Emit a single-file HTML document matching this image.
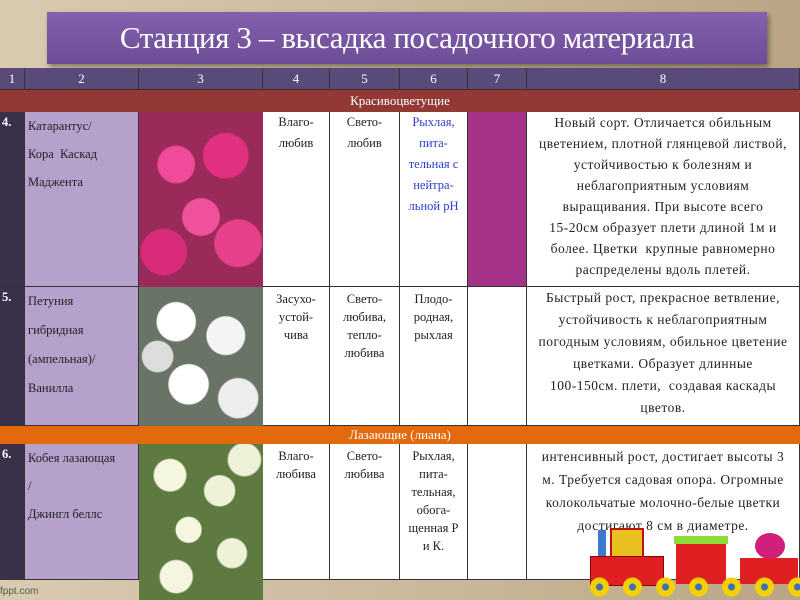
<!DOCTYPE html>
<html><head><meta charset="utf-8"><style>
body{margin:0;width:800px;height:600px;overflow:hidden;background:linear-gradient(90deg,#d9cbb0,#c8b698 60%,#b9a585);font-family:"Liberation Serif",serif;position:relative}
.title{position:absolute;left:47px;top:12px;width:720px;height:52px;background:linear-gradient(#8460ad,#6d4d98);box-shadow:2px 3px 5px rgba(0,0,0,.4);color:#fff;font-size:31px;text-align:center;line-height:52px;letter-spacing:-0.4px}
.c{position:absolute;box-sizing:border-box;border-right:1px solid #333;border-bottom:1px solid #333;font-size:12.5px;line-height:21px;text-align:center;color:#222}
.h{background:#5a4a7a;color:#fff;font-size:13px;line-height:22px}
.n{background:#3b3049;color:#fff;text-align:left;padding-left:2px;font-weight:bold}
.p{background:#b6a0cc;text-align:left;padding-left:3px;line-height:28px}
.w{background:#fff}
.t{white-space:nowrap;font-size:13.5px;letter-spacing:0.5px}
.band{position:absolute;left:0;width:800px;color:#fff;font-size:13px;text-align:center}
.img{position:absolute}
</style></head><body>
<div class="title">Станция 3 – высадка посадочного материала</div>
<div class="c h" style="left:0;top:68px;width:25px;height:22px">1</div>
<div class="c h" style="left:25px;top:68px;width:114px;height:22px">2</div>
<div class="c h" style="left:139px;top:68px;width:124px;height:22px">3</div>
<div class="c h" style="left:263px;top:68px;width:67px;height:22px">4</div>
<div class="c h" style="left:330px;top:68px;width:70px;height:22px">5</div>
<div class="c h" style="left:400px;top:68px;width:68px;height:22px">6</div>
<div class="c h" style="left:468px;top:68px;width:59px;height:22px">7</div>
<div class="c h" style="left:527px;top:68px;width:273px;height:22px">8</div>
<div class="band" style="top:90px;height:22px;line-height:22px;background:#923935">Красивоцветущие</div>
<!-- row 4 -->
<div class="c n" style="left:0;top:112px;width:25px;height:175px">4.</div>
<div class="c p" style="left:25px;top:112px;width:114px;height:175px;line-height:28px">Катарантус/<br>Кора&nbsp; Каскад<br>Маджента</div>
<div class="img" style="left:139px;top:112px;width:124px;height:175px;background:radial-gradient(circle at 30% 30%,#f04a9a 0 12%,transparent 13%),radial-gradient(circle at 70% 25%,#e0307f 0 14%,transparent 15%),radial-gradient(circle at 50% 60%,#f0509c 0 15%,transparent 16%),radial-gradient(circle at 20% 80%,#d82c7a 0 13%,transparent 14%),radial-gradient(circle at 80% 75%,#e8418c 0 14%,transparent 15%),#9a2a5a"></div>
<div class="c w" style="left:263px;top:112px;width:67px;height:175px">Влаго-<br>любив</div>
<div class="c w" style="left:330px;top:112px;width:70px;height:175px">Свето-<br>любив</div>
<div class="c w" style="left:400px;top:112px;width:68px;height:175px;color:#2a3fd0">Рыхлая,<br>пита-<br>тельная с<br>нейтра-<br>льной рН</div>
<div class="c" style="left:468px;top:112px;width:59px;height:175px;background:#a5338a"></div>
<div class="c w t" style="left:527px;top:112px;width:273px;height:175px">Новый сорт. Отличается обильным<br>цветением, плотной глянцевой листвой,<br>устойчивостью к болезням и<br>неблагоприятным условиям<br>выращивания. При высоте всего<br>15-20см образует плети длиной 1м и<br>более. Цветки&nbsp; крупные равномерно<br>распределены вдоль плетей.</div>
<!-- row 5 -->
<div class="c n" style="left:0;top:287px;width:25px;height:139px">5.</div>
<div class="c p" style="left:25px;top:287px;width:114px;height:139px;line-height:29px">Петуния<br>гибридная<br>(ампельная)/<br>Ванилла</div>
<div class="img" style="left:139px;top:287px;width:124px;height:139px;background:radial-gradient(circle at 30% 25%,#fff 0 14%,transparent 15%),radial-gradient(circle at 70% 35%,#f4f4f4 0 15%,transparent 16%),radial-gradient(circle at 40% 70%,#fff 0 16%,transparent 17%),radial-gradient(circle at 80% 80%,#eee 0 13%,transparent 14%),radial-gradient(circle at 15% 50%,#ddd 0 12%,transparent 13%),#6a7466"></div>
<div class="c w" style="left:263px;top:287px;width:67px;height:139px;line-height:18px;padding-top:3px">Засухо-<br>устой-<br>чива</div>
<div class="c w" style="left:330px;top:287px;width:70px;height:139px;line-height:18px;padding-top:3px">Свето-<br>любива,<br>тепло-<br>любива</div>
<div class="c w" style="left:400px;top:287px;width:68px;height:139px;line-height:18px;padding-top:3px">Плодо-<br>родная,<br>рыхлая</div>
<div class="c w" style="left:468px;top:287px;width:59px;height:139px"></div>
<div class="c w t" style="left:527px;top:287px;width:273px;height:139px;line-height:22px">Быстрый рост, прекрасное ветвление,<br>устойчивость к неблагоприятным<br>погодным условиям, обильное цветение<br>цветками. Образует длинные<br>100-150см. плети,&nbsp; создавая каскады<br>цветов.</div>
<div class="band" style="top:426px;height:18px;line-height:18px;background:#e2690c">Лазающие (лиана)</div>
<!-- row 6 -->
<div class="c n" style="left:0;top:444px;width:25px;height:136px">6.</div>
<div class="c p" style="left:25px;top:444px;width:114px;height:136px;line-height:28px">Кобея лазающая<br>/<br>Джингл беллс</div>
<div class="c w" style="left:263px;top:444px;width:67px;height:136px;line-height:18px;padding-top:3px">Влаго-<br>любива</div>
<div class="c w" style="left:330px;top:444px;width:70px;height:136px;line-height:18px;padding-top:3px">Свето-<br>любива</div>
<div class="c w" style="left:400px;top:444px;width:68px;height:136px;line-height:18px;padding-top:3px">Рыхлая,<br>пита-<br>тельная,<br>обога-<br>щенная Р<br>и К.</div>
<div class="c w" style="left:468px;top:444px;width:59px;height:136px"></div>
<div class="c w t" style="left:527px;top:444px;width:273px;height:136px;line-height:23px;padding-top:1px">интенсивный рост, достигает высоты 3<br>м. Требуется садовая опора. Огромные<br>колокольчатые молочно-белые цветки<br>достигают 8 см в диаметре.</div>
<div class="img" style="left:139px;top:444px;width:124px;height:156px;background:radial-gradient(circle at 25% 20%,#f4f6e0 0 10%,transparent 11%),radial-gradient(circle at 65% 30%,#eef2d8 0 11%,transparent 12%),radial-gradient(circle at 40% 55%,#f4f6e0 0 11%,transparent 12%),radial-gradient(circle at 75% 70%,#eef2d8 0 10%,transparent 11%),radial-gradient(circle at 30% 85%,#f4f6e0 0 10%,transparent 11%),radial-gradient(circle at 85% 10%,#eef2d8 0 9%,transparent 10%),#5e7a40"></div>
<div style="position:absolute;left:0;top:586px;font:10px 'Liberation Sans',sans-serif;color:#555">fppt.com</div>
<!-- train -->
<div style="position:absolute;left:598px;top:530px;width:8px;height:40px;background:#3a7bd0"></div>
<div style="position:absolute;left:610px;top:528px;width:30px;height:30px;background:#e8c020;border:2px solid #c01010"></div>
<div style="position:absolute;left:590px;top:556px;width:72px;height:28px;background:#e02020;border:1px solid #800"></div>
<div style="position:absolute;left:674px;top:536px;width:54px;height:8px;background:#8ddc3c"></div>
<div style="position:absolute;left:676px;top:544px;width:50px;height:40px;background:#e02020"></div>
<div style="position:absolute;left:740px;top:558px;width:58px;height:26px;background:#e02020"></div>
<div style="position:absolute;left:755px;top:533px;width:30px;height:26px;border-radius:50%;background:#d0207a"></div>
<div style="position:absolute;left:583px;top:577px;width:217px;height:20px;background:radial-gradient(circle,#3a6fc0 0 3px,#f5d000 4px 9px,transparent 10px) 0 0/33px 20px"></div>
</body></html>
